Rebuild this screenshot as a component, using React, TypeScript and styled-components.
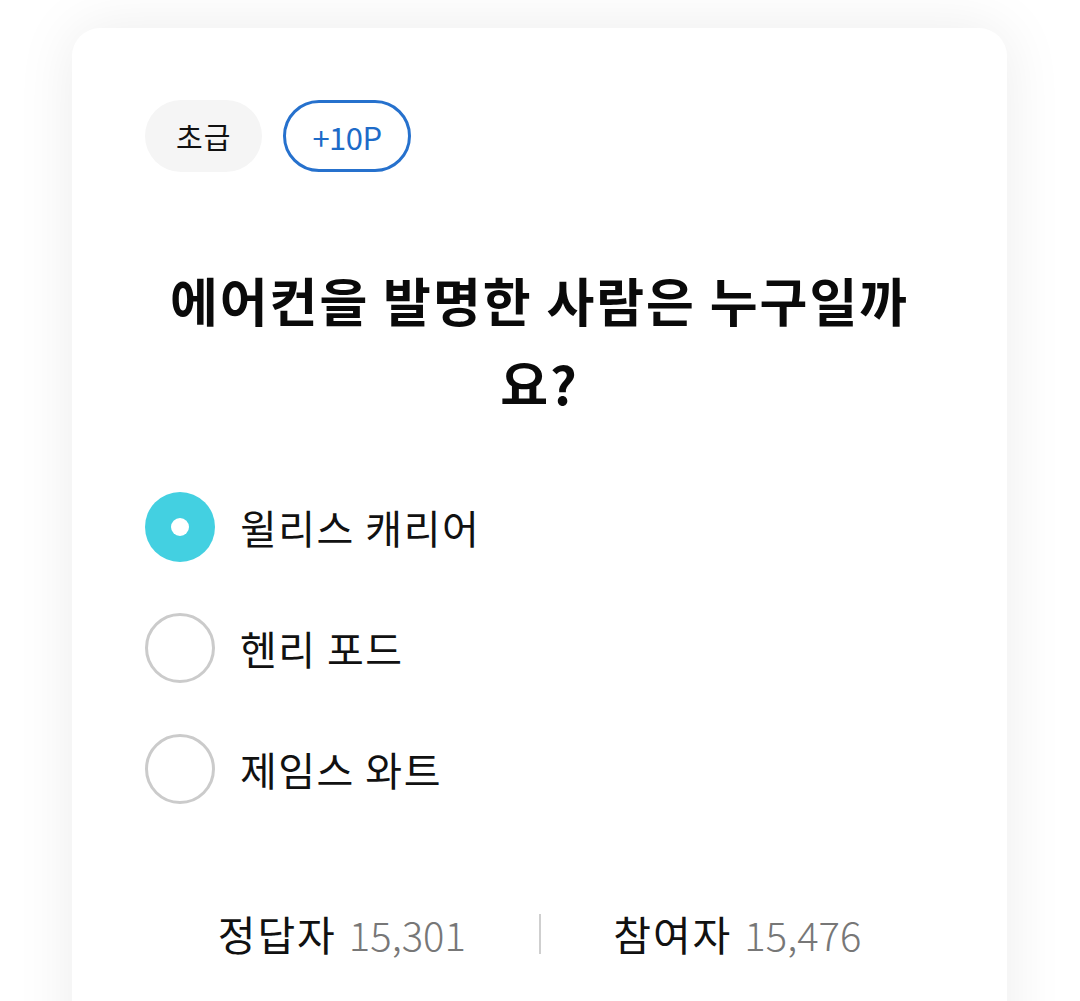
import styled, { createGlobalStyle } from 'styled-components';

const GlobalStyle = createGlobalStyle`
  html, body {
    margin: 0;
    padding: 0;
    background: #ffffff;
    font-family: "Noto Sans CJK KR", "Noto Sans", sans-serif;
    color: #111;
  }
  * { box-sizing: border-box; }
`;

const Page = styled.div`
  padding: 28px 73px 0 72px;
  height: 1001px;
  overflow: hidden;
`;

const Card = styled.section`
  background: #fff;
  border-radius: 28px;
  box-shadow: 0 0 60px rgba(0, 0, 0, 0.08);
  padding: 72px 73px 80px;
  min-height: 1100px;
  display: flex;
  flex-direction: column;
`;

const TagRow = styled.div`
  display: flex;
  gap: 21px;
`;

const Tag = styled.span<{ $outline?: boolean }>`
  display: inline-flex;
  align-items: center;
  justify-content: center;
  height: 72px;
  border-radius: 36px;
  padding: 0 ${({ $outline }) => ($outline ? '26px' : '31px')};
  background: ${({ $outline }) => ($outline ? '#fff' : '#f5f5f5')};
  color: ${({ $outline }) => ($outline ? '#1d6bc8' : '#111')};
  border: ${({ $outline }) => ($outline ? '3px solid #2671cd' : 'none')};
  font-size: ${({ $outline }) => ($outline ? '31px' : '29px')};
  letter-spacing: ${({ $outline }) => ($outline ? '-0.5px' : '1px')};
`;

const Question = styled.h1`
  margin: 86px 0 0;
  font-size: 52px;
  font-weight: 700;
  line-height: 83px;
  letter-spacing: 2px;
  text-align: center;
  color: #0a0a0a;
`;

const OptionList = styled.ul`
  list-style: none;
  margin: 68px 0 0;
  padding: 0;
  display: flex;
  flex-direction: column;
  gap: 51px;
`;

const Option = styled.li`
  display: flex;
  align-items: center;
  gap: 25px;
  height: 70px;
  font-size: 40px;
  letter-spacing: 1.5px;
  color: #111;
`;

const Radio = styled.span<{ $checked?: boolean }>`
  flex: none;
  width: 70px;
  height: 70px;
  border-radius: 50%;
  display: flex;
  align-items: center;
  justify-content: center;
  background: ${({ $checked }) => ($checked ? '#43d0e1' : '#fff')};
  border: ${({ $checked }) => ($checked ? 'none' : '3px solid #cbcbcb')};

  &::after {
    content: '';
    display: ${({ $checked }) => ($checked ? 'block' : 'none')};
    width: 18px;
    height: 18px;
    border-radius: 50%;
    background: #fff;
  }
`;

const Stats = styled.div`
  margin-top: 102px;
  display: flex;
  align-items: center;
`;

const StatItem = styled.div`
  flex: 1;
  display: flex;
  justify-content: center;
  align-items: baseline;
  gap: 12px;
  line-height: 54px;
`;

const StatLabel = styled.span`
  font-size: 41px;
  letter-spacing: 2px;
  color: #111;
`;

const StatValue = styled.span`
  font-size: 40px;
  font-weight: 300;
  color: #777;
`;

const Divider = styled.span`
  flex: none;
  width: 2px;
  height: 40px;
  background: #cfcfcf;
`;

const options = [
  { label: '윌리스 캐리어', checked: true },
  { label: '헨리 포드', checked: false },
  { label: '제임스 와트', checked: false },
];

export default function App() {
  return (
    <>
      <GlobalStyle />
      <Page>
        <Card>
          <TagRow>
            <Tag>초급</Tag>
            <Tag $outline>+10P</Tag>
          </TagRow>
          <Question>에어컨을 발명한 사람은 누구일까요?</Question>
          <OptionList>
            {options.map((o) => (
              <Option key={o.label}>
                <Radio $checked={o.checked} />
                {o.label}
              </Option>
            ))}
          </OptionList>
          <Stats>
            <StatItem>
              <StatLabel>정답자</StatLabel>
              <StatValue>15,301</StatValue>
            </StatItem>
            <Divider />
            <StatItem>
              <StatLabel>참여자</StatLabel>
              <StatValue>15,476</StatValue>
            </StatItem>
          </Stats>
        </Card>
      </Page>
    </>
  );
}
